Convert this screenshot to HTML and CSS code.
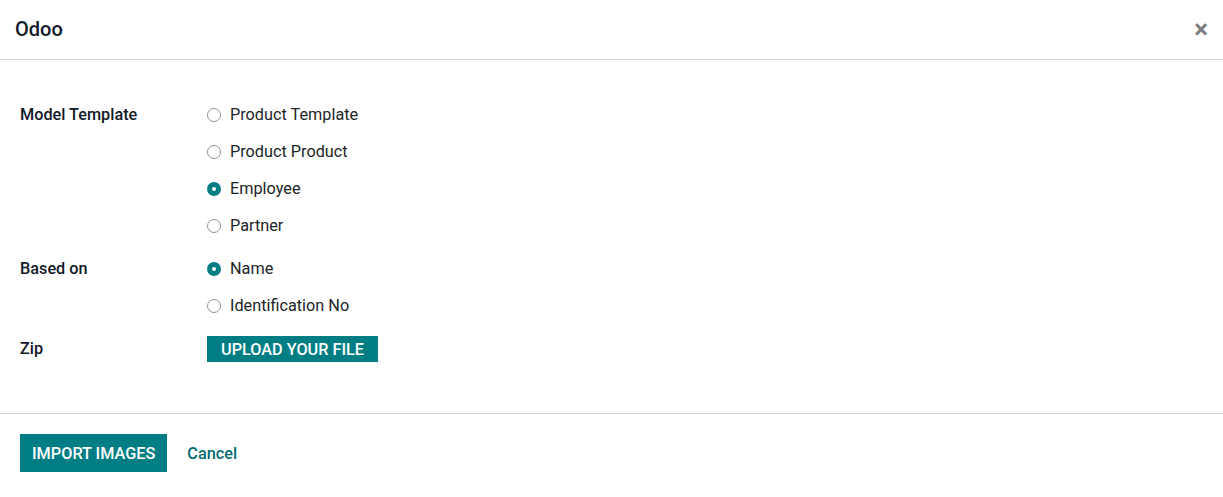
FILE: index.html
```html
<!DOCTYPE html>
<html lang="en">
<head>
  <meta charset="UTF-8" />
  <title>Odoo</title>
  <link rel="stylesheet" href="styles.css">
</head>
<body>
  <div class="dialog">
    <!-- Header -->
    <div class="dialog-header">
      <h4 class="dialog-title">Odoo</h4>
      <button class="btn-close" type="button" aria-label="Close">&times;</button>
    </div>

    <!-- Body -->
    <div class="dialog-body">
      <div class="field-row">
        <div class="field-label">Model Template</div>
        <div class="field-value">
          <label class="radio"><span class="radio-dot"></span>Product Template</label>
          <label class="radio"><span class="radio-dot"></span>Product Product</label>
          <label class="radio"><span class="radio-dot checked"></span>Employee</label>
          <label class="radio"><span class="radio-dot"></span>Partner</label>
        </div>
      </div>

      <div class="field-row">
        <div class="field-label">Based on</div>
        <div class="field-value">
          <label class="radio"><span class="radio-dot checked"></span>Name</label>
          <label class="radio"><span class="radio-dot"></span>Identification No</label>
        </div>
      </div>

      <div class="field-row">
        <div class="field-label">Zip</div>
        <div class="field-value">
          <button class="btn btn-upload" type="button">UPLOAD YOUR FILE</button>
        </div>
      </div>
    </div>

    <!-- Footer -->
    <div class="dialog-footer">
      <button class="btn btn-primary" type="button">IMPORT IMAGES</button>
      <a class="btn-link" href="#">Cancel</a>
    </div>
  </div>
</body>
</html>
```

FILE: styles.css
```css
/* Base */
body {
  margin: 0;
  font-family: Roboto, "Noto Sans", sans-serif;
  font-size: 16.25px;
  color: #212529;
  background: #fff;
}

/* Header */
.dialog-header {
  display: flex;
  align-items: center;
  justify-content: space-between;
  height: 59px;
  padding: 0 15px;
  border-bottom: 1px solid #d0d3d6;
}
.dialog-title {
  margin: 0 0 2px;
  font-size: 20px;
  font-weight: 500;
  color: #111827;
}
.btn-close {
  border: 0;
  background: none;
  padding: 0 0 2px;
  font-family: Roboto, sans-serif;
  font-size: 26px;
  font-weight: 700;
  color: #7b7e82;
  line-height: 1;
  cursor: pointer;
}

/* Body */
.dialog-body {
  padding: 36px 20px 46px;
}
.field-row {
  display: flex;
  margin-bottom: 6px;
}
.field-row:last-child {
  margin-bottom: 0;
}
.field-label {
  width: 187px;
  font-weight: 500;
  line-height: 37px;
  color: #111827;
}
.field-value {
  display: flex;
  flex-direction: column;
  align-items: flex-start;
}
.radio {
  display: flex;
  align-items: center;
  height: 37px;
  cursor: pointer;
}
.radio-dot {
  box-sizing: border-box;
  width: 14px;
  height: 14px;
  margin-right: 9px;
  border: 1px solid #8f9297;
  border-radius: 50%;
  background: #fff;
}
.radio-dot.checked {
  border: 5px solid #017e84;
  background: #fff;
}

/* Buttons */
.btn {
  border: 0;
  font-family: Roboto, sans-serif;
  font-size: 16.25px;
  font-weight: 500;
  color: #fff;
  background: #017e84;
  cursor: pointer;
}
.btn-upload {
  margin-top: 6px;
  height: 26px;
  padding: 0 14px;
}
.btn-primary {
  height: 38px;
  padding: 0 12px;
}
.btn-link {
  margin-left: 20px;
  font-weight: 500;
  color: #016b70;
  text-decoration: none;
}

/* Footer */
.dialog-footer {
  display: flex;
  align-items: center;
  padding: 20px 20px;
  border-top: 1px solid #d0d3d6;
}
```
